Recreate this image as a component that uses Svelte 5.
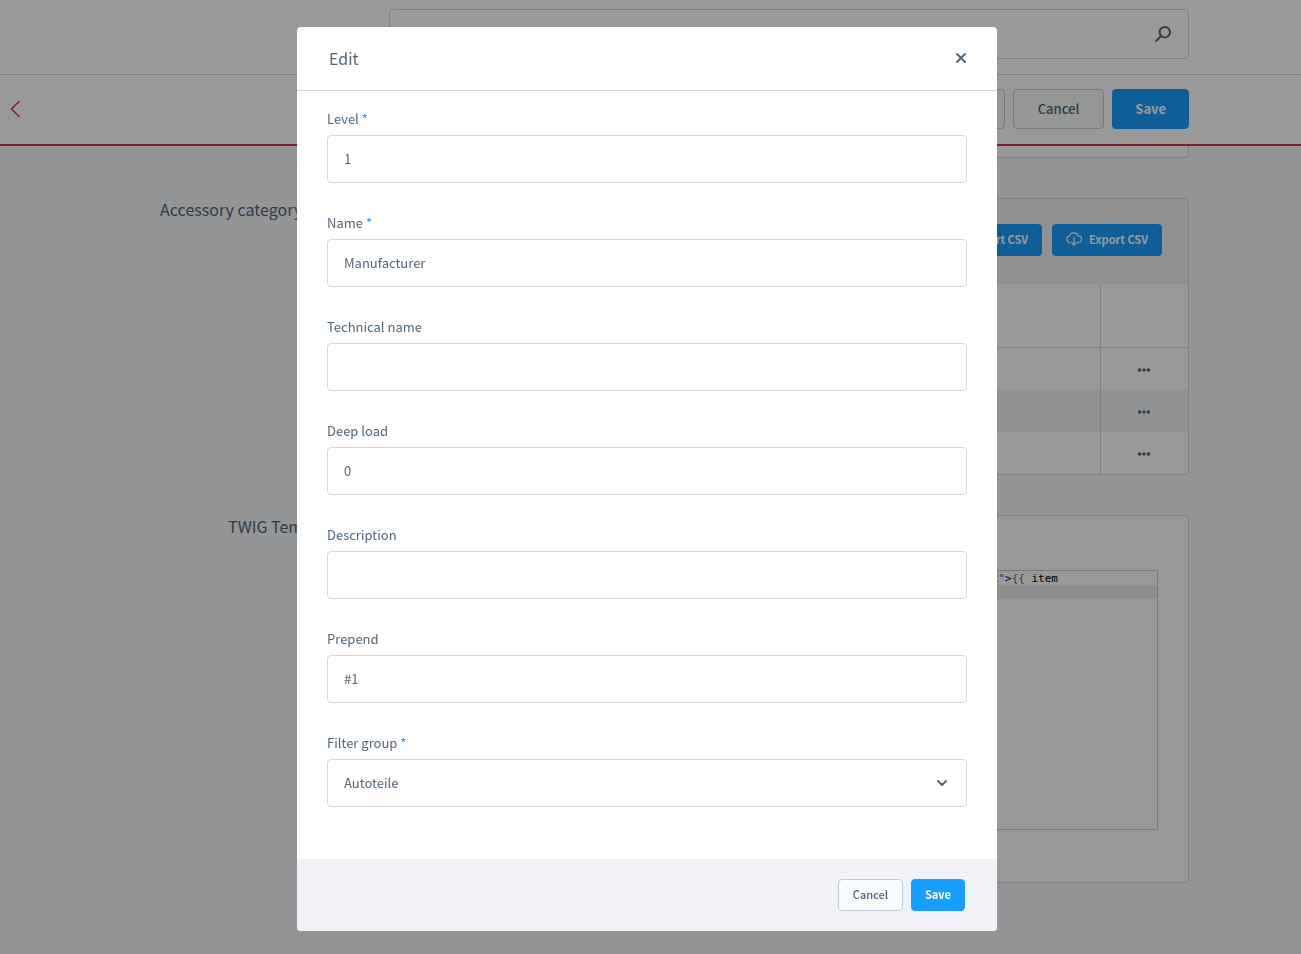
<script>
	let abierto = true;
	let fields = [
		{ id: "level", label: "Level", value: "1", required: true },
		{ id: "name", label: "Name", value: "Manufacturer", required: true },
		{ id: "technical", label: "Technical name", value: "" },
		{ id: "deepload", label: "Deep load", value: "0" },
		{ id: "description", label: "Description", value: "" },
		{ id: "prepend", label: "Prepend", value: "#1" },
	];
	let filterGroup = "Autoteile";
	let search = "";
	let rows = [1, 2, 3];

	let cerrar = () => {
		abierto = false;
	};
</script>

<div class="page">
	<header class="topbar">
		<div class="search">
			<input type="text" aria-label="Search" bind:value={search} />
			<svg width="16" height="16" viewBox="0 0 16 16" fill="none" stroke="#52667a" stroke-width="2" stroke-linecap="round">
				<circle cx="9.8" cy="6.2" r="5.2" />
				<path d="M6 10 1.3 14.7" />
			</svg>
		</div>
	</header>

	<div class="smartbar">
		<a class="back" href="#back" aria-label="Back">
			<svg width="10" height="18" viewBox="0 0 10 18" fill="none" stroke="#e0344a" stroke-width="1.5" stroke-linecap="round" stroke-linejoin="round">
				<path d="M9.2 1.5 1.4 9l7.8 7.5" />
			</svg>
		</a>
		<div class="actions">
			<button type="button" class="btn" aria-label="Language"></button>
			<button type="button" class="btn">Cancel</button>
			<button type="button" class="btn primary">Save</button>
		</div>
	</div>

	<main class="content">
		<section class="row">
			<div></div>
			<div class="card stub"></div>
		</section>

		<section class="row">
			<h2>Accessory category level</h2>
			<div class="card">
				<div class="toolbar">
					<button type="button" class="btn small primary">Import CSV</button>
					<button type="button" class="btn small primary">
						<svg width="16" height="14" viewBox="0 0 16 14" fill="none" stroke="#fff" stroke-width="1.2" stroke-linecap="round" stroke-linejoin="round">
							<path d="M5 10.5H3.8A3.2 3.2 0 0 1 3.3 4.2 4.7 4.7 0 0 1 12.2 3.9 3.3 3.3 0 0 1 12.3 10.5H11M8 5v8M6 11.2l2 2 2-2" />
						</svg>
						Export CSV
					</button>
				</div>
				<table>
					<thead>
						<tr>
							<th></th>
							<th class="menu"></th>
						</tr>
					</thead>
					<tbody>
						{#each rows as row}
							<tr>
								<td></td>
								<td class="menu">
									<button type="button" class="dots" aria-label="Row actions">
										<svg width="14" height="4" viewBox="0 0 14 4" fill="#52667a">
											<circle cx="2.6" cy="2" r="1.7" />
											<circle cx="7" cy="2" r="1.7" />
											<circle cx="11.4" cy="2" r="1.7" />
										</svg>
									</button>
								</td>
							</tr>
						{/each}
					</tbody>
				</table>
			</div>
		</section>

		<section class="row">
			<h2>TWIG Template</h2>
			<div class="card template">
				<div class="editor">
					<pre><span class="str">2"</span><span class="tag">&gt;</span><span class="twig">{"{{"}</span> item</pre>
					<div class="active-line"></div>
				</div>
			</div>
		</section>
	</main>
</div>

{#if abierto}
	<div class="overlay">
		<div class="modal" role="dialog" aria-labelledby="modal-title">
			<div class="modal-header">
				<h1 id="modal-title">Edit</h1>
				<button type="button" class="close" aria-label="Close" on:click={cerrar}>
					<svg width="12" height="12" viewBox="0 0 12 12" fill="none" stroke="#52667a" stroke-width="2" stroke-linecap="round">
						<path d="M2 2l8 8M10 2l-8 8" />
					</svg>
				</button>
			</div>
			<form class="modal-body">
				{#each fields as field}
					<div class="field">
						<label for={field.id}>
							{field.label}
							{#if field.required}<span class="required">*</span>{/if}
						</label>
						<input type="text" id={field.id} bind:value={field.value} />
					</div>
				{/each}
				<div class="field">
					<label for="filtergroup">Filter group <span class="required">*</span></label>
					<div class="select">
						<select id="filtergroup" bind:value={filterGroup}>
							<option>Autoteile</option>
						</select>
						<svg width="12" height="8" viewBox="0 0 12 8" fill="none" stroke="#52667a" stroke-width="2" stroke-linecap="round" stroke-linejoin="round">
							<path d="M2 2l4 4 4-4" />
						</svg>
					</div>
				</div>
			</form>
			<div class="modal-footer">
				<button type="button" class="btn small" on:click={cerrar}>Cancel</button>
				<button type="button" class="btn small primary">Save</button>
			</div>
		</div>
	</div>
{/if}

<style>
	:global(body) {
		margin: 0;
		background: #f5f8fb;
	}
	.page,
	.overlay {
		font-family: "Source Sans Pro", "Noto Sans CJK SC", sans-serif;
		font-size: 13px;
		line-height: 20px;
		color: #52667a;
	}
	.page *,
	.overlay * {
		box-sizing: border-box;
	}
	.page {
		min-height: 100vh;
		background: #f5f8fb;
	}
	button,
	input,
	select {
		font: inherit;
		color: inherit;
	}
	button {
		cursor: pointer;
	}
	h1,
	h2 {
		margin: 0;
		font-size: 16px;
		line-height: 22px;
		font-weight: 400;
	}

	/* top */
	.topbar {
		display: flex;
		justify-content: flex-end;
		padding: 9px 112px 15px;
		background: #fff;
		border-bottom: 1px solid #d1d9e0;
	}
	.search {
		display: flex;
		align-items: center;
		width: 800px;
		height: 50px;
		padding-right: 17px;
		border: 1px solid #d1d9e0;
		border-radius: 4px;
	}
	.search input {
		flex: 1;
		height: 100%;
		padding: 0 16px;
		border: 0;
		background: none;
	}
	.smartbar {
		display: flex;
		align-items: center;
		justify-content: space-between;
		padding: 14px 112px 15px 10px;
		background: #fff;
		border-bottom: 2px solid #de294c;
	}
	.back {
		display: flex;
	}
	.actions {
		display: flex;
		gap: 8px;
	}
	.btn {
		display: flex;
		align-items: center;
		justify-content: center;
		gap: 7px;
		height: 40px;
		padding: 0 24px;
		border: 1px solid #c3ccd6;
		border-radius: 4px;
		background: #f9fafb;
		font-weight: 500;
	}
	.btn.primary {
		padding: 0 22px;
		border-color: #189eff;
		background: #189eff;
		color: #fff;
		font-weight: 700;
	}
	.btn.small {
		height: 32px;
		padding: 0 14px 2px;
		font-size: 11px;
	}
	.btn.small.primary {
		padding: 0 13px 2px;
	}

	/* content behind the modal */
	.row {
		display: grid;
		grid-template-columns: minmax(0, 1fr) 800px;
		column-gap: 48px;
		padding-right: 112px;
		margin-bottom: 40px;
	}
	.row h2 {
		text-align: right;
	}
	.card {
		border: 1px solid #d1d9e0;
		border-radius: 4px;
		background: #fff;
		overflow: hidden;
	}
	.card.stub {
		height: 12px;
		border-top: 0;
		border-radius: 0 0 4px 4px;
	}
	.toolbar {
		display: flex;
		align-items: flex-start;
		justify-content: flex-end;
		gap: 10px;
		height: 85px;
		padding: 25px 26px 0;
		background: #f0f2f5;
	}
	table {
		width: 100%;
		border-collapse: separate;
		border-spacing: 0;
	}
	th {
		height: 64px;
		padding: 0;
		border-bottom: 1px solid #d1d9e0;
	}
	td {
		height: 42px;
		padding: 2px 0 0;
	}
	.menu {
		width: 88px;
		padding-right: 2px;
		border-left: 1px solid #d1d9e0;
		text-align: center;
	}
	tbody tr:nth-child(even) {
		background: #f0f2f5;
	}
	.dots {
		display: flex;
		margin: 0 auto;
		padding: 4px;
		border: 0;
		background: none;
	}
	.card.template {
		padding: 54px 30px 52px;
	}
	.editor {
		height: 260px;
		border: 1px solid #c3ccd6;
	}
	.editor pre {
		height: 14px;
		margin: 0;
		padding: 1px 99px 0 0;
		font: 11px/14px "DejaVu Sans Mono", monospace;
		text-align: right;
		color: #000;
	}
	.str {
		color: #2a6a8a;
	}
	.tag {
		color: #000080;
	}
	.twig {
		color: #4f7080;
	}
	.active-line {
		height: 14px;
		background: #ededed;
	}

	/* modal */
	.overlay {
		position: fixed;
		inset: 0;
		display: flex;
		align-items: flex-start;
		justify-content: center;
		padding: 27px 7px 0 0;
		background: rgba(0, 0, 0, 0.4);
		overflow: auto;
	}
	.modal {
		width: 700px;
		border-radius: 4px;
		background: #fff;
		overflow: hidden;
	}
	.modal-header {
		display: flex;
		align-items: center;
		justify-content: space-between;
		height: 64px;
		padding: 0 26px 2px 32px;
		border-bottom: 1px solid #d1d9e0;
	}
	.close {
		display: flex;
		padding: 4px;
		border: 0;
		background: none;
	}
	.modal-body {
		display: flex;
		flex-direction: column;
		gap: 30px;
		padding: 18px 30px 52px;
	}
	.field label {
		display: block;
		margin-bottom: 6px;
	}
	.required {
		color: #189eff;
	}
	.field input,
	.field select {
		display: block;
		width: 100%;
		height: 48px;
		padding: 0 16px;
		border: 1px solid #d1d9e0;
		border-radius: 4px;
		background: #fff;
		outline: none;
	}
	.field input {
		padding-bottom: 2px;
	}
	.select {
		position: relative;
	}
	.select select {
		appearance: none;
	}
	.select svg {
		position: absolute;
		right: 19px;
		top: 20px;
		pointer-events: none;
	}
	.modal-footer {
		display: flex;
		align-items: center;
		justify-content: flex-end;
		gap: 8px;
		height: 72px;
		padding: 0 32px;
		background: #f0f2f5;
	}
</style>
